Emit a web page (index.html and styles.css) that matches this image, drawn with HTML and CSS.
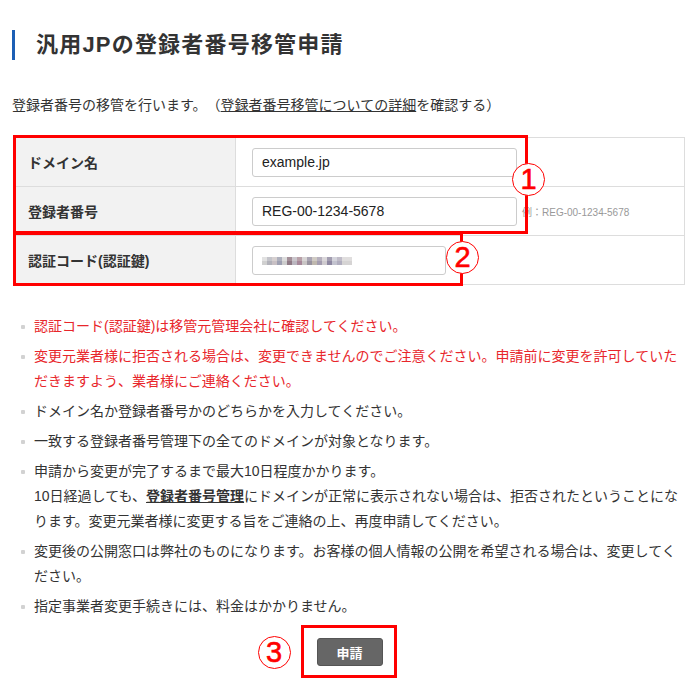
FILE: index.html
```html
<!DOCTYPE html>
<html lang="ja">

<head>
    <meta charset="UTF-8">
    <meta name="viewport" content="width=device-width, initial-scale=1.0">
    <title>汎用JPの登録者番号移管申請</title>
    <link rel="stylesheet" href="styles.css">
</head>

<body>
    <div class="page">
        <h1 class="title">汎用JPの登録者番号移管申請</h1>
        <p class="lead">登録者番号の移管を行います。　（<a href="#">登録者番号移管についての詳細</a>を確認する）</p>

        <div class="form-area">
            <table class="form">
                <tr>
                    <th>ドメイン名</th>
                    <td><input class="field" type="text" value="example.jp"></td>
                </tr>
                <tr>
                    <th>登録者番号</th>
                    <td><input class="field" type="text" value="REG-00-1234-5678"><span class="hint">例：REG-00-1234-5678</span></td>
                </tr>
                <tr>
                    <th>認証コード(認証鍵)</th>
                    <td><input class="field field-short secret" type="text" value=""></td>
                </tr>
            </table>
            <!-- 注釈の赤枠 -->
            <div class="mark mark-1"></div>
            <div class="mark mark-2"></div>
            <span class="num num-1">1</span>
            <span class="num num-2">2</span>
        </div>

        <ul class="notes">
            <li class="warn">認証コード(認証鍵)は移管元管理会社に確認してください。</li>
            <li class="warn">変更元業者様に拒否される場合は、変更できませんのでご注意ください。申請前に変更を許可していただきますよう、業者様にご連絡ください。</li>
            <li>ドメイン名か登録者番号かのどちらかを入力してください。</li>
            <li>一致する登録者番号管理下の全てのドメインが対象となります。</li>
            <li>申請から変更が完了するまで最大10日程度かかります。<br>10日経過しても、<a href="#" class="strong-link">登録者番号管理</a>にドメインが正常に表示されない場合は、拒否されたということになります。変更元業者様に変更する旨をご連絡の上、再度申請してください。</li>
            <li>変更後の公開窓口は弊社のものになります。お客様の個人情報の公開を希望される場合は、変更してください。</li>
            <li>指定事業者変更手続きには、料金はかかりません。</li>
        </ul>

        <div class="actions">
            <span class="btn-box">
                <span class="num num-3">3</span>
                <button class="btn" type="button">申請</button>
            </span>
        </div>
    </div>
</body>

</html>
```

FILE: styles.css
```css
* {
    padding: 0;
    margin: 0;
    box-sizing: border-box;
}

body {
    background: #fff;
    color: #333;
    font-family: "Liberation Sans", "Noto Sans CJK JP", sans-serif;
    font-size: 14px;
}

.page {
    width: 685px;
    padding: 30px 0 0 12px;
}

.title {
    border-left: 3px solid #1d5fb5;
    padding-left: 21px;
    font-size: 22px;
    line-height: 30px;
    letter-spacing: 1.2px;
    font-weight: bold;
}

.lead {
    margin-top: 35px;
    line-height: 20px;
}

.lead a {
    color: #333;
    text-decoration: underline;
}

.form-area {
    position: relative;
    margin-top: 22px;
    margin-left: 1px;
}

.form {
    width: 672px;
    border-collapse: collapse;
}

.form th,
.form td {
    height: 49px;
    border: 1px solid #ddd;
    vertical-align: middle;
}

.form th {
    width: 222px;
    background: #f2f2f2;
    text-align: left;
    padding-left: 14px;
    font-size: 14px;
}

.form td {
    padding-left: 16px;
}

.field {
    width: 265px;
    height: 29px;
    border: 1px solid #ccc;
    border-radius: 3px;
    padding-left: 9px;
    font-family: "Liberation Sans", sans-serif;
    font-size: 14px;
    color: #222;
    vertical-align: middle;
}

.field-short {
    width: 194px;
}

/* ぼかした認証コード */
.secret {
    background:
        linear-gradient(90deg,
            #e2e2e2 0 5px, #c4c4ca 5px 10px, #d6d0d0 10px 15px, #aeb0bd 15px 20px,
            #dcdcdc 20px 25px, #a38f98 25px 30px, #cac6cc 30px 35px, #b8a0a8 35px 40px,
            #d8d5d5 40px 45px, #aaa5b3 45px 50px, #d0cbc4 50px 55px, #b6b0bd 55px 60px,
            #dad7da 60px 65px, #a29db0 65px 70px, #d4d4dc 70px 75px, #c0bcc8 75px 80px,
            #e0dede 80px 90px) no-repeat 9px 10px / 90px 4px,
        linear-gradient(90deg,
            #d0d0d0 0 5px, #b2b2ba 5px 10px, #c8c0c4 10px 15px, #9ea0b2 15px 20px,
            #cdcdcd 20px 25px, #8f7a86 25px 30px, #bbb6bf 30px 35px, #a7889a 35px 40px,
            #c9c5c5 40px 45px, #98939f 45px 50px, #bfb8ae 50px 55px, #a49db0 55px 60px,
            #cfcbcf 60px 65px, #8e88a2 65px 70px, #c3c3cf 70px 75px, #b1aebf 75px 80px,
            #d6d4d4 80px 90px) no-repeat 9px 14px / 90px 4px,
        #fff;
}

.hint {
    margin-left: 5px;
    font-size: 10px;
    color: #999;
    vertical-align: middle;
}

.mark {
    position: absolute;
    border: 3px solid #f00;
}

.mark-1 {
    left: 0;
    top: -2px;
    width: 515px;
    height: 99px;
}

.mark-2 {
    left: 0;
    top: 95px;
    width: 450px;
    height: 54px;
}

.num {
    position: absolute;
    width: 33px;
    height: 33px;
    border: 1.5px solid #f00;
    border-radius: 50%;
    background: #fff;
    color: #f00;
    font-family: "Liberation Sans", sans-serif;
    font-size: 29px;
    line-height: 30px;
    text-align: center;
    -webkit-text-stroke: 0.6px #f00;
}

.num-1 {
    left: 499px;
    top: 26px;
}

.num-2 {
    left: 433px;
    top: 104px;
}

.num-3 {
    left: -46px;
    top: 8px;
}

.notes {
    list-style: none;
    margin-top: 29px;
    padding-left: 22px;
}

.notes li {
    position: relative;
    line-height: 25px;
    margin-bottom: 5px;
}

.notes li::before {
    content: "";
    position: absolute;
    left: -13px;
    top: 11px;
    width: 4px;
    height: 4px;
    border-radius: 1px;
    background: #d2d2d2;
}

.notes .warn {
    color: #e8262b;
}

.strong-link {
    color: #333;
    font-weight: bold;
    text-decoration: underline;
}

.actions {
    margin-top: 6px;
    text-align: center;
}

.btn-box {
    position: relative;
    display: inline-block;
    border: 3px solid #f00;
    padding: 10px 11px 9px 13px;
}

.btn {
    display: block;
    width: 66px;
    height: 28px;
    background: #666;
    border: 1px solid #555;
    border-radius: 3px;
    color: #fff;
    font-family: "Liberation Sans", "Noto Sans CJK JP", sans-serif;
    font-size: 13px;
    font-weight: bold;
}
```
